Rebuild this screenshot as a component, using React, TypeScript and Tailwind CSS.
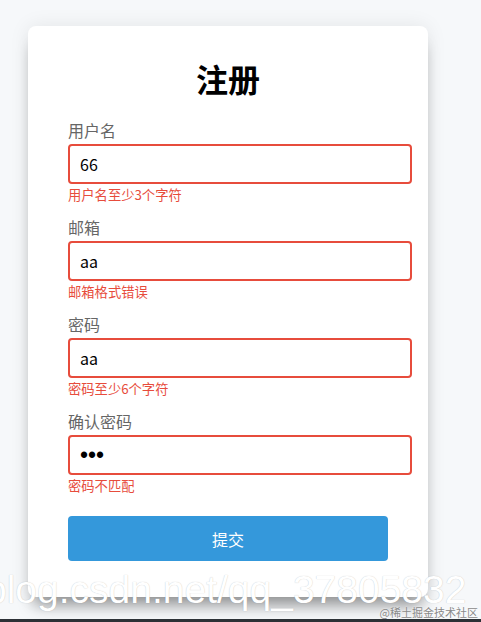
import React from "react";

interface Field {
  label: string;
  type: string;
  value: string;
  error: string;
}

const fields: Field[] = [
  { label: "用户名", type: "text", value: "66", error: "用户名至少3个字符" },
  { label: "邮箱", type: "text", value: "aa", error: "邮箱格式错误" },
  { label: "密码", type: "text", value: "aa", error: "密码至少6个字符" },
  { label: "确认密码", type: "password", value: "aaa", error: "密码不匹配" },
];

const font = "font-['Noto_Sans_CJK_SC','Noto_Sans',sans-serif]";

const App = () => {
  return (
    <div className={`relative h-[622px] w-[481px] overflow-hidden bg-[#f6f8fa] ${font}`}>
      <div className="ml-[28px] mt-[26px] w-[400px] rounded-[8px] bg-white px-[40px] pt-[30px] pb-[36px] shadow-[0_14px_16px_-6px_rgba(0,0,0,0.4),0_0_20px_rgba(0,0,0,0.08)]">
        <h1 className="mb-[20px] text-center text-[32px] font-bold leading-[44px] text-black">注册</h1>

        <form onSubmit={(e) => e.preventDefault()}>
          {fields.map((f) => (
            <div key={f.label} className="mb-[13px]">
              <label className="mb-[4px] block text-[16px] leading-[20px] text-[#666]">{f.label}</label>
              <input
                type={f.type}
                defaultValue={f.value}
                className={`box-content block h-[16px] w-full rounded-[4px] border-2 border-[#e74c3c] px-[10px] py-[10px] leading-[16px] text-black outline-none ${
                  f.type === "password" ? "font-['Liberation_Sans',sans-serif] text-[23px]" : "text-[16px]"
                }`}
              />
              <div className="mt-[2px] text-[13.3px] leading-[18px] text-[#e74c3c]">{f.error}</div>
            </div>
          ))}

          <button
            type="submit"
            className="mt-[21px] block h-[45px] w-full rounded-[4px] bg-[#3498db] text-[16px] text-white"
          >
            提交
          </button>
        </form>
      </div>

      {/* 水印 */}
      <div className="pointer-events-none absolute left-[-15px] top-[567px] whitespace-nowrap font-['Liberation_Sans',sans-serif] text-[39px] leading-[46px] text-white [text-shadow:0_0_1px_rgba(0,0,0,0.25)]">
        blog.csdn.net/qq_37805832
      </div>
      <div className="pointer-events-none absolute right-[3px] top-[606px] text-[11px] leading-[13px] text-[#8a8a8a] [text-shadow:0_0_2px_#fff]">
        @稀土掘金技术社区
      </div>
      <div className="absolute bottom-0 left-0 h-[3px] w-full bg-[#2c3136]" />
    </div>
  );
};

export default App;
